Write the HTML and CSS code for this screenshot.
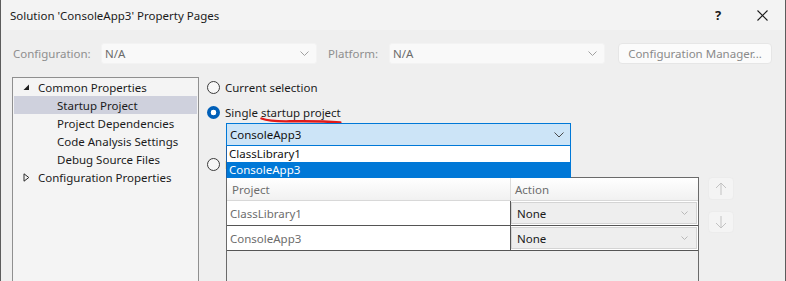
FILE: index.html
```html
<!DOCTYPE html>
<html>
<head>
<meta charset="utf-8">
<link rel="stylesheet" href="styles.css">
</head>
<body>
<div class="window">
  <div class="titlebar">
    <span class="title">Solution 'ConsoleApp3' Property Pages</span>
    <span class="tb-help">?</span>
    <span class="tb-close"><svg width="11" height="11" viewBox="0 0 11 11"><path d="M0.5 0.5L10.5 10.5M10.5 0.5L0.5 10.5" stroke="#1a1a1a" stroke-width="1.1" fill="none"/></svg></span>
  </div>

  <div class="config-row">
    <span class="cfg-label">Configuration:</span>
    <div class="cfg-combo"><span>N/A</span><svg class="chev" width="9" height="5" viewBox="0 0 9 5"><path d="M0.5 0.5L4.5 4.5L8.5 0.5" stroke="#a0a0a0" fill="none"/></svg></div>
    <span class="cfg-label plat">Platform:</span>
    <div class="cfg-combo"><span>N/A</span><svg class="chev" width="9" height="5" viewBox="0 0 9 5"><path d="M0.5 0.5L4.5 4.5L8.5 0.5" stroke="#a0a0a0" fill="none"/></svg></div>
    <button class="cfg-btn">Configuration Manager...</button>
  </div>

  <div class="main">
    <div class="tree">
      <div class="tree-row lvl0">
        <span class="twisty"><svg width="7" height="7" viewBox="0 0 7 7"><path d="M6 0.5L6 6L0.5 6Z" fill="#1e1e1e"/></svg></span>
        <span>Common Properties</span>
      </div>
      <div class="tree-row lvl1 selected">Startup Project</div>
      <div class="tree-row lvl1">Project Dependencies</div>
      <div class="tree-row lvl1">Code Analysis Settings</div>
      <div class="tree-row lvl1">Debug Source Files</div>
      <div class="tree-row lvl0">
        <span class="twisty"><svg width="7" height="9" viewBox="0 0 7 9"><path d="M1 0.8L5.8 4.5L1 8.2Z" fill="none" stroke="#2a2a2a" stroke-width="1"/></svg></span>
        <span>Configuration Properties</span>
      </div>
    </div>

    <div class="content">
      <div class="radio-row">
        <span class="radio"></span>
        <span>Current selection</span>
      </div>
      <div class="radio-row r2">
        <span class="radio checked"></span>
        <span>Single <span class="marked">startup project<svg class="scribble" viewBox="0 0 84 8" preserveAspectRatio="none"><path d="M1.5 1.5C8 4 16 4.5 30 4.3C48 4 66 4.2 81.5 5.5" stroke="#e01a1a" stroke-width="2.4" fill="none" stroke-linecap="round"/></svg></span></span>
      </div>
      <div class="combo-wrap">
        <div class="combo">
          <span>ConsoleApp3</span>
          <svg class="chev" width="10" height="6" viewBox="0 0 10 6"><path d="M0.5 0.5L5 5L9.5 0.5" stroke="#4a4a4a" fill="none"/></svg>
        </div>
        <div class="droplist">
          <div class="drop-item">ClassLibrary1</div>
          <div class="drop-item sel">ConsoleApp3</div>
        </div>
      </div>
      <div class="radio-row r3">
        <span class="radio"></span>
        <span>Multiple startup projects</span>
      </div>

      <div class="grid-area">
        <div class="grid">
          <div class="grid-head">
            <div class="hcell proj">Project</div>
            <div class="hcell act">Action</div>
          </div>
          <div class="grid-row">
            <div class="cell proj">ClassLibrary1</div>
            <div class="cell act"><div class="act-combo"><span>None</span><svg class="chev" width="7" height="4" viewBox="0 0 7 4"><path d="M0.5 0.5L3.5 3.5L6.5 0.5" stroke="#b8b8b8" fill="none"/></svg></div></div>
          </div>
          <div class="grid-row">
            <div class="cell proj">ConsoleApp3</div>
            <div class="cell act"><div class="act-combo"><span>None</span><svg class="chev" width="7" height="4" viewBox="0 0 7 4"><path d="M0.5 0.5L3.5 3.5L6.5 0.5" stroke="#b8b8b8" fill="none"/></svg></div></div>
          </div>
        </div>
        <div class="arrows">
          <div class="arrow-btn up"><svg width="12" height="14" viewBox="0 0 12 14"><path d="M6 1V13M1 6L6 1L11 6" stroke="#c2c2c2" fill="none" stroke-width="1"/></svg></div>
          <div class="arrow-btn down"><svg width="12" height="14" viewBox="0 0 12 14"><path d="M6 1V13M1 8L6 13L11 8" stroke="#c2c2c2" fill="none" stroke-width="1"/></svg></div>
        </div>
      </div>
    </div>
  </div>
</div>
</body>
</html>
```

FILE: styles.css
```css
* { box-sizing: border-box; }
html, body { margin: 0; padding: 0; }
body {
  font-family: "Noto Sans", "Segoe UI", sans-serif;
  font-size: 11.5px;
  color: #1b1b1b;
  background: #efefef;
}
.window {
  width: 786px;
  height: 281px;
  overflow: hidden;
  border-left: 1px solid #5c5c5c;
  border-right: 1px solid #5c5c5c;
  background: #efefef;
}
.titlebar {
  height: 30px;
  background: #f3f3f3;
  display: flex;
  align-items: center;
  padding-left: 9px;
  padding-right: 13px;
}
.title { flex: 1; color: #1a1a1a; }
.tb-help {
  width: 20px;
  text-align: center;
  font-weight: 700;
  font-size: 13px;
  color: #1a1a1a;
}
.tb-close {
  width: 20px;
  margin-left: 24px;
  display: flex;
  justify-content: center;
}
.config-row {
  display: flex;
  align-items: center;
  padding-top: 13px;
  padding-left: 12px;
  height: 34px;
}
.cfg-label {
  width: 88px;
  color: #8e8e8e;
}
.cfg-label.plat { width: 61px; margin-left: 11px; }
.cfg-combo {
  width: 216px;
  height: 21px;
  background: #f9f9f9;
  border: 1px solid #f3f3f3;
  border-radius: 3px;
  display: flex;
  align-items: center;
  justify-content: space-between;
  padding: 0 7px 0 3px;
  color: #6b6b6b;
}
.cfg-btn {
  margin-left: 13px;
  width: 154px;
  height: 21px;
  background: #fbfbfb;
  border: 1px solid #e6e6e6;
  border-radius: 4px;
  color: #8a8a8a;
  font: inherit;
  padding: 0;
  margin-top: -1px;
}
.main {
  display: flex;
  margin-top: 13px;
  padding-left: 11px;
}
.tree {
  width: 187px;
  height: 220px;
  border: 1px solid #8f8f8f;
  border-bottom: none;
  background: #f4f4f4;
  padding: 0 1px;
}
.tree-row {
  height: 18px;
  display: flex;
  align-items: center;
  white-space: nowrap;
}
.tree-row.lvl0 { padding-left: 9px; }
.tree-row.lvl1 { padding-left: 43px; }
.tree-row.selected { background: #cfd1dd; }
.twisty {
  width: 15px;
  display: flex;
  align-items: center;
}
.content {
  margin-left: 8px;
  padding-top: 3px;
  display: flex;
  flex-direction: column;
}
.radio-row {
  position: relative;
  height: 14px;
  display: flex;
  align-items: center;
  gap: 5px;
  white-space: nowrap;
}
.radio-row.r2 { margin-top: 11px; }
.radio-row.r3 { margin-top: 11px; }
.radio {
  width: 13px;
  height: 13px;
  border-radius: 50%;
  border: 1px solid #3b3b3b;
  background: #f7f7f7;
  flex: none;
}
.radio.checked {
  border: none;
  background: radial-gradient(circle, #ffffff 0 2.6px, #005fb8 3.1px);
}
.marked { position: relative; }
.scribble {
  position: absolute;
  left: -1px;
  top: 12px;
  width: calc(100% + 3px);
  height: 8px;
}
.combo-wrap {
  position: relative;
  margin-top: 4px;
  margin-left: 19px;
  width: 345px;
  z-index: 2;
}
.combo {
  height: 23px;
  border: 1px solid #0078d7;
  background: #cce4f7;
  display: flex;
  align-items: center;
  justify-content: space-between;
  padding: 0 6px 0 3px;
  color: #111;
}
.droplist {
  position: absolute;
  top: 100%;
  left: 0;
  width: 345px;
  border-left: 1px solid #1b5fa6;
  border-right: 1px solid #0078d7;
  background: #fff;
}
.drop-item {
  height: 16px;
  line-height: 16px;
  padding-left: 2px;
  color: #111;
}
.drop-item.sel { background: #0078d7; color: #fff; }
.grid-area {
  display: flex;
  margin-top: 6px;
  margin-left: 19px;
}
.grid {
  width: 473px;
  height: 120px;
  border: 1px solid #6a6a6a;
  border-bottom: none;
  background: #efefef;
}
.grid-head {
  display: flex;
  height: 23px;
  background: linear-gradient(#ffffff, #f1f1f1);
  border-bottom: 1px solid #d8d8d8;
}
.hcell {
  color: #6d6d6d;
  display: flex;
  align-items: center;
}
.hcell.proj { width: 284px; padding-left: 5px; border-right: 1px solid #dcdcdc; }
.hcell.act { flex: 1; padding-left: 4px; }
.grid-row {
  display: flex;
  height: 25px;
  border-bottom: 1px solid #555555;
  background: #ffffff;
}
.cell { display: flex; align-items: center; }
.cell.proj { width: 284px; padding-left: 3px; border-right: 1px solid #555555; color: #6d6d6d; }
.cell.act { flex: 1; padding: 1px 1px 1px 0; }
.act-combo {
  width: 100%;
  height: 22px;
  background: #eeeeee;
  border: 1px solid #d4d4d4;
  display: flex;
  align-items: center;
  justify-content: space-between;
  padding: 0 8px 0 5px;
  color: #1a1a1a;
}
.arrows {
  margin-left: 9px;
  display: flex;
  flex-direction: column;
  gap: 11px;
}
.arrow-btn {
  width: 26px;
  height: 23px;
  background: #f4f4f4;
  border: 1px solid #ececec;
  border-radius: 4px;
  display: flex;
  align-items: center;
  justify-content: center;
}
.arrow-btn.down { height: 22px; }
```
